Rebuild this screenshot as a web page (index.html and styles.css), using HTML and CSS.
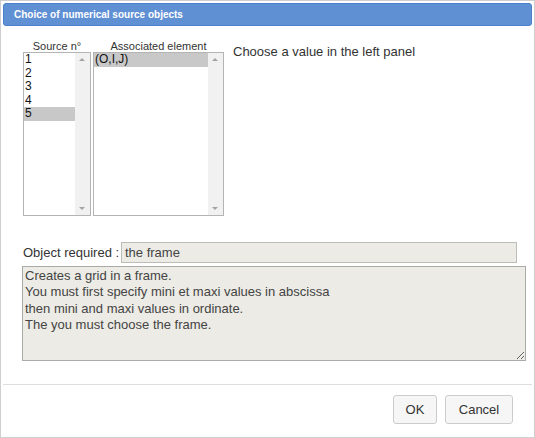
FILE: index.html
```html
<!DOCTYPE html>
<html>
<head>
<meta charset="utf-8">
<link rel="stylesheet" href="styles.css">
</head>
<body>
<div class="dialog">
  <div class="titlebar">Choice of numerical source objects</div>
  <div class="content">
    <div class="top">
      <div class="col col1">
        <div class="collabel">Source n°</div>
        <div class="listbox">
          <div class="items">
            <div class="item">1</div>
            <div class="item">2</div>
            <div class="item">3</div>
            <div class="item">4</div>
            <div class="item sel">5</div>
          </div>
          <div class="scroll"><span class="up"></span><span class="down"></span></div>
        </div>
      </div>
      <div class="col col2">
        <div class="collabel">Associated element</div>
        <div class="listbox">
          <div class="items">
            <div class="item sel">(O,I,J)</div>
          </div>
          <div class="scroll"><span class="up"></span><span class="down"></span></div>
        </div>
      </div>
      <div class="hint">Choose a value in the left panel</div>
    </div>
    <div class="reqrow">
      <span class="reqlabel">Object required :</span>
      <div class="reqfield">the frame</div>
    </div>
    <textarea class="desc" readonly>Creates a grid in a frame.
You must first specify mini et maxi values in abscissa
then mini and maxi values in ordinate.
The you must choose the frame.</textarea>
  </div>
  <div class="footer">
    <button class="btn ok">OK</button>
    <button class="btn cancel">Cancel</button>
  </div>
</div>
</body>
</html>
```
FILE: styles.css
```css
html, body {
  margin: 0;
  padding: 0;
  background: #fff;
}
.dialog {
  width: 535px;
  height: 438px;
  box-sizing: border-box;
  border: 1px solid #cfcfcf;
  padding: 2px;
  font-family: "Liberation Sans", Arial, sans-serif;
  display: flex;
  flex-direction: column;
  color: #333;
}
.titlebar {
  height: 23px;
  box-sizing: border-box;
  background: #6090d4;
  border: 1px solid #4c80cc;
  border-radius: 3px;
  color: #fff;
  font-weight: bold;
  font-size: 10px;
  line-height: 21px;
  padding-left: 10px;
}
.content {
  flex: 1;
  padding: 13px 0 0 20px;
  display: flex;
  flex-direction: column;
}
.top {
  display: flex;
  align-items: flex-start;
}
.col {
  display: flex;
  flex-direction: column;
}
.col1 { width: 68px; margin-right: 2px; }
.col2 { width: 131px; }
.collabel {
  font-size: 11px;
  line-height: 15px;
  height: 13px;
  text-align: center;
  color: #333;
}
.listbox {
  height: 164px;
  box-sizing: border-box;
  border: 1px solid #b4b4b4;
  display: flex;
  background: #fff;
}
.items {
  flex: 1;
}
.item {
  font-size: 12px;
  line-height: 13.5px;
  height: 13.5px;
  padding-left: 1px;
  color: #111;
}
.item.sel {
  background: #c8c8c8;
}
.scroll {
  width: 15px;
  background: #f1f1f1;
  position: relative;
}
.up, .down {
  position: absolute;
  left: 4px;
  width: 0;
  height: 0;
  border-left: 3.5px solid transparent;
  border-right: 3.5px solid transparent;
}
.up {
  top: 5px;
  border-bottom: 3.5px solid #a3a3a3;
}
.down {
  bottom: 5px;
  border-top: 3.5px solid #a3a3a3;
}
.hint {
  margin-left: 9px;
  font-size: 13px;
  line-height: 15px;
  margin-top: 5px;
  color: #333;
}
.reqrow {
  display: flex;
  align-items: center;
  margin-top: 26px;
  height: 21px;
}
.reqlabel {
  font-size: 13px;
  color: #333;
  width: 98px;
}
.reqfield {
  width: 396px;
  height: 21px;
  box-sizing: border-box;
  background: #ecebe5;
  border: 1px solid #bdbdb8;
  font-size: 13px;
  line-height: 19px;
  padding-left: 3px;
  color: #444;
}
.desc {
  margin: 3px 0 0 -1px;
  width: 504px;
  height: 95px;
  box-sizing: border-box;
  background: #ecebe5;
  border: 1px solid #aaaaa6;
  font-family: "Liberation Sans", Arial, sans-serif;
  font-size: 13px;
  line-height: 16.3px;
  padding: 1px 2px 0;
  color: #444;
  resize: both;
  outline: none;
  overflow: hidden;
}
.footer {
  height: 51px;
  border-top: 1px solid #dedede;
  display: flex;
  justify-content: flex-end;
  align-items: flex-start;
  padding: 10px 19px 0 0;
  box-sizing: border-box;
  gap: 8px;
}
.btn {
  height: 29px;
  box-sizing: border-box;
  background: #f6f6f6;
  border: 1px solid #cccccc;
  border-radius: 3px;
  font-family: "Liberation Sans", Arial, sans-serif;
  font-size: 13px;
  color: #333;
  padding: 0;
}
.ok { width: 44px; }
.cancel { width: 68px; }
```
